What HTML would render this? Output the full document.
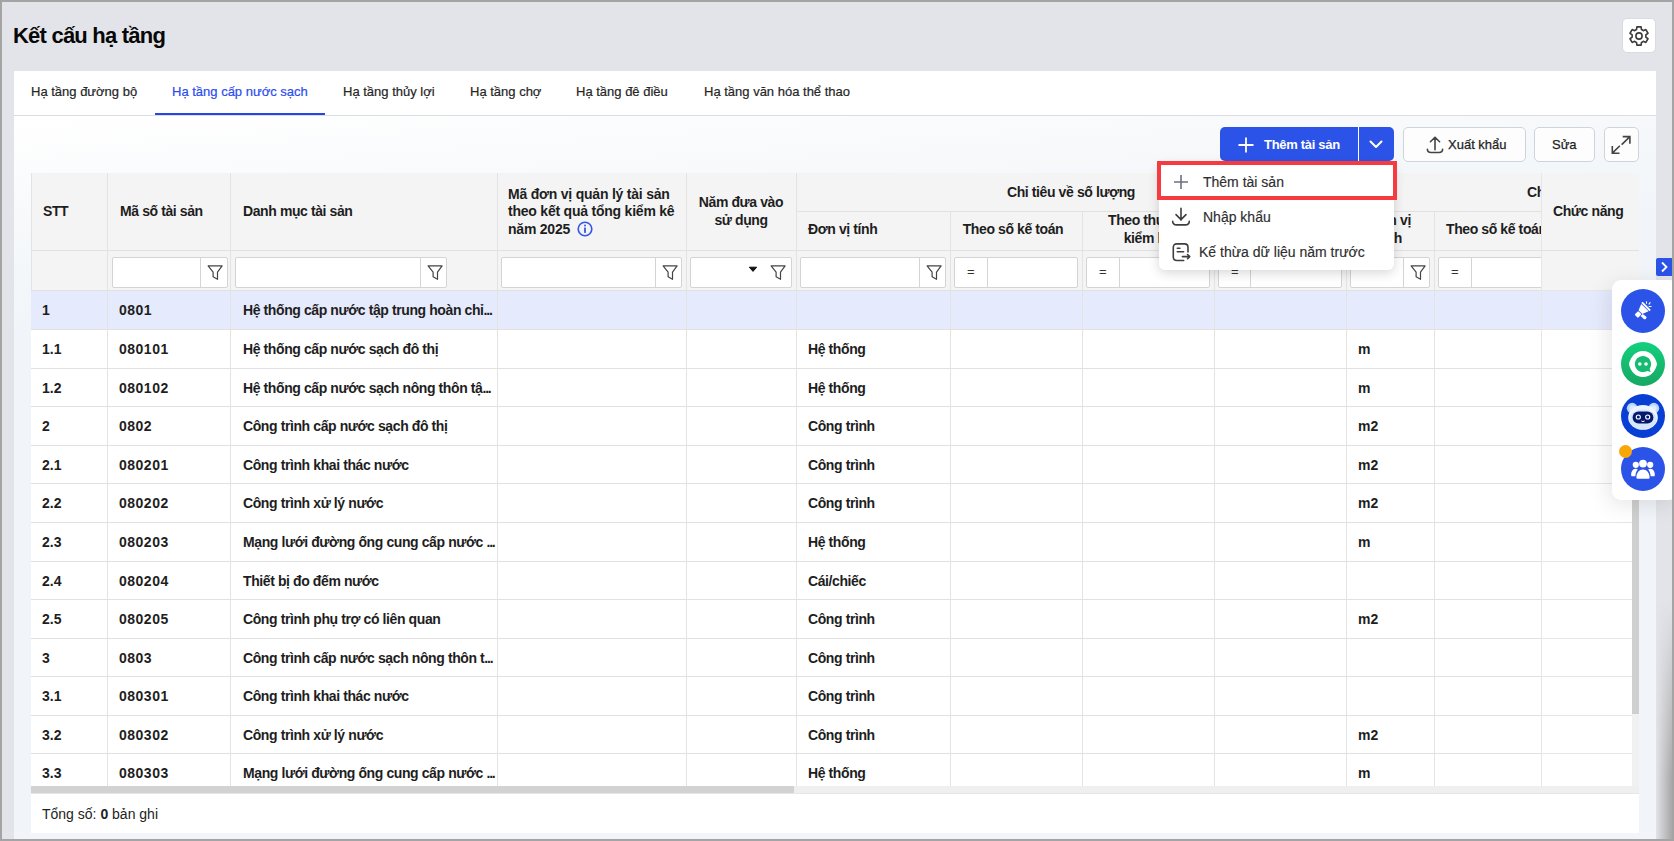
<!DOCTYPE html><html><head><meta charset="utf-8"><style>
*{box-sizing:border-box;margin:0;padding:0}
html,body{width:1674px;height:841px;overflow:hidden}
body{position:relative;background:#e3e4e9;font-family:"Liberation Sans",sans-serif;color:#212121}
.a{position:absolute}
#frame{position:absolute;left:0;top:0;width:1674px;height:841px;border:2px solid #a4a4a4;z-index:100}
#title{left:13px;top:23px;font-size:22px;letter-spacing:-0.78px;font-weight:700;color:#080808;line-height:26px;white-space:nowrap}
#gear{left:1622px;top:18px;width:34px;height:35px;background:#fff;border:1px solid #d7dbe2;border-radius:5px}
#panel{left:14px;top:71px;width:1642px;height:768px;background:linear-gradient(176deg,#ffffff 50px,#f7f9fb 150px,#f1f5f9 260px,#f1f5f9 100%)}
#tabs{left:14px;top:71px;width:1642px;height:45px;background:#fff;border-bottom:1px solid #d9dce3}
.tab{position:absolute;top:84px;font-size:13px;line-height:16px;color:#262626;white-space:nowrap;-webkit-text-stroke:0.2px #262626}
.tab.act{color:#2a4cf0;-webkit-text-stroke:0.2px #2a4cf0}
#tabline{left:155px;top:113px;width:170px;height:2px;background:#2446e6}
.btn{position:absolute;top:127px;height:35px;border:1px solid #cfd4dc;border-radius:5px;background:#fdfdfe;font-size:13px;line-height:32px;color:#1f1f1f;white-space:nowrap}
#addbtn{left:1220px;top:127px;width:174px;height:34px;background:#2c53e8;border-radius:5px}
.bg{position:absolute;background:#f4f4f4}
.hd{position:absolute;font-size:14px;letter-spacing:-0.4px;font-weight:700;line-height:17.5px;color:#1e1e1e;white-space:nowrap}
.vl{position:absolute;width:1px;background:#e3e3e3}
.hl{position:absolute;height:1px;background:#e1e1e1}
.cell{position:absolute;font-size:14px;letter-spacing:-0.4px;font-weight:700;line-height:16px;color:#1e1e1e;white-space:nowrap}
.inp{position:absolute;top:257px;height:31px;background:#fff;border:1px solid #d4d4d4;border-radius:2px}
.sep{position:absolute;top:0;width:1px;height:29px;background:#d4d4d4}
.fn{position:absolute;top:6px}
.eq{position:absolute;top:6px;font-size:13px;line-height:16px;color:#333}
.mi{position:absolute;font-size:14px;line-height:16px;color:#2e2e2e;white-space:nowrap;-webkit-text-stroke:0.15px #2e2e2e}
.wc{position:absolute;left:1621px;width:44px;height:44px;border-radius:50%}
</style></head><body>
<div id="title" class="a">Kết cấu hạ tầng</div>
<div id="gear" class="a"><div class="a" style="left:4px;top:5px"><svg width="24" height="24" viewBox="0 0 24 24" fill="none" stroke="#3c3c3c" stroke-width="1.6" stroke-linejoin="round"><path d="M8.55 6.02 L9.53 5.56 L9.89 2.84 L14.11 2.84 L14.47 5.56 L15.45 6.02 L16.34 6.64 L18.87 5.59 L20.99 9.25 L18.82 10.92 L18.90 12.00 L18.82 13.08 L20.99 14.75 L18.87 18.41 L16.34 17.36 L15.45 17.98 L14.47 18.44 L14.11 21.16 L9.89 21.16 L9.53 18.44 L8.55 17.98 L7.66 17.36 L5.13 18.41 L3.01 14.75 L5.18 13.08 L5.10 12.00 L5.18 10.92 L3.01 9.25 L5.13 5.59 L7.66 6.64Z"/><circle cx="12" cy="12" r="3.1"/></svg></div></div>
<div id="panel" class="a"></div>
<div id="tabs" class="a"></div>
<div class="tab" style="left:31px">Hạ tầng đường bộ</div>
<div class="tab act" style="left:172px">Hạ tầng cấp nước sạch</div>
<div class="tab" style="left:343px">Hạ tầng thủy lợi</div>
<div class="tab" style="left:470px">Hạ tầng chợ</div>
<div class="tab" style="left:576px">Hạ tầng đê điều</div>
<div class="tab" style="left:704px">Hạ tầng văn hóa thể thao</div>
<div id="tabline" class="a"></div>
<div class="bg" style="left:31px;top:173px;width:1608px;height:118px"></div>
<div class="a" style="left:31px;top:291px;width:1601px;height:502px;background:#fff"></div>
<div class="a" style="left:31px;top:291px;width:1601px;height:38px;background:#e6eafd"></div>
<div class="hl" style="left:31px;top:329px;width:1601px"></div>
<div class="cell" style="left:42px;top:302.49px;letter-spacing:0px">1</div>
<div class="cell" style="left:119px;top:302.49px;letter-spacing:0.5px">0801</div>
<div class="cell" style="left:243px;top:302.49px;letter-spacing:-0.4px">Hệ thống cấp nước tập trung hoàn chỉ<span style="letter-spacing:-1.2px">...</span></div>
<div class="hl" style="left:31px;top:368px;width:1601px"></div>
<div class="cell" style="left:42px;top:341.07px;letter-spacing:0px">1.1</div>
<div class="cell" style="left:119px;top:341.07px;letter-spacing:0.5px">080101</div>
<div class="cell" style="left:243px;top:341.07px;letter-spacing:-0.4px">Hệ thống cấp nước sạch đô thị</div>
<div class="cell" style="left:808px;top:341.07px;letter-spacing:-0.4px">Hệ thống</div>
<div class="cell" style="left:1358px;top:341.07px;letter-spacing:0px">m</div>
<div class="hl" style="left:31px;top:406px;width:1601px"></div>
<div class="cell" style="left:42px;top:379.65px;letter-spacing:0px">1.2</div>
<div class="cell" style="left:119px;top:379.65px;letter-spacing:0.5px">080102</div>
<div class="cell" style="left:243px;top:379.65px;letter-spacing:-0.4px">Hệ thống cấp nước sạch nông thôn tậ<span style="letter-spacing:-1.2px">...</span></div>
<div class="cell" style="left:808px;top:379.65px;letter-spacing:-0.4px">Hệ thống</div>
<div class="cell" style="left:1358px;top:379.65px;letter-spacing:0px">m</div>
<div class="hl" style="left:31px;top:445px;width:1601px"></div>
<div class="cell" style="left:42px;top:418.23px;letter-spacing:0px">2</div>
<div class="cell" style="left:119px;top:418.23px;letter-spacing:0.5px">0802</div>
<div class="cell" style="left:243px;top:418.23px;letter-spacing:-0.4px">Công trình cấp nước sạch đô thị</div>
<div class="cell" style="left:808px;top:418.23px;letter-spacing:-0.4px">Công trình</div>
<div class="cell" style="left:1358px;top:418.23px;letter-spacing:0px">m2</div>
<div class="hl" style="left:31px;top:483px;width:1601px"></div>
<div class="cell" style="left:42px;top:456.81px;letter-spacing:0px">2.1</div>
<div class="cell" style="left:119px;top:456.81px;letter-spacing:0.5px">080201</div>
<div class="cell" style="left:243px;top:456.81px;letter-spacing:-0.4px">Công trình khai thác nước</div>
<div class="cell" style="left:808px;top:456.81px;letter-spacing:-0.4px">Công trình</div>
<div class="cell" style="left:1358px;top:456.81px;letter-spacing:0px">m2</div>
<div class="hl" style="left:31px;top:522px;width:1601px"></div>
<div class="cell" style="left:42px;top:495.39px;letter-spacing:0px">2.2</div>
<div class="cell" style="left:119px;top:495.39px;letter-spacing:0.5px">080202</div>
<div class="cell" style="left:243px;top:495.39px;letter-spacing:-0.4px">Công trình xử lý nước</div>
<div class="cell" style="left:808px;top:495.39px;letter-spacing:-0.4px">Công trình</div>
<div class="cell" style="left:1358px;top:495.39px;letter-spacing:0px">m2</div>
<div class="hl" style="left:31px;top:561px;width:1601px"></div>
<div class="cell" style="left:42px;top:533.97px;letter-spacing:0px">2.3</div>
<div class="cell" style="left:119px;top:533.97px;letter-spacing:0.5px">080203</div>
<div class="cell" style="left:243px;top:533.97px;letter-spacing:-0.4px">Mạng lưới đường ống cung cấp nước <span style="letter-spacing:-1.2px">...</span></div>
<div class="cell" style="left:808px;top:533.97px;letter-spacing:-0.4px">Hệ thống</div>
<div class="cell" style="left:1358px;top:533.97px;letter-spacing:0px">m</div>
<div class="hl" style="left:31px;top:599px;width:1601px"></div>
<div class="cell" style="left:42px;top:572.55px;letter-spacing:0px">2.4</div>
<div class="cell" style="left:119px;top:572.55px;letter-spacing:0.5px">080204</div>
<div class="cell" style="left:243px;top:572.55px;letter-spacing:-0.4px">Thiết bị đo đếm nước</div>
<div class="cell" style="left:808px;top:572.55px;letter-spacing:-0.4px">Cái/chiếc</div>
<div class="hl" style="left:31px;top:638px;width:1601px"></div>
<div class="cell" style="left:42px;top:611.13px;letter-spacing:0px">2.5</div>
<div class="cell" style="left:119px;top:611.13px;letter-spacing:0.5px">080205</div>
<div class="cell" style="left:243px;top:611.13px;letter-spacing:-0.4px">Công trình phụ trợ có liên quan</div>
<div class="cell" style="left:808px;top:611.13px;letter-spacing:-0.4px">Công trình</div>
<div class="cell" style="left:1358px;top:611.13px;letter-spacing:0px">m2</div>
<div class="hl" style="left:31px;top:676px;width:1601px"></div>
<div class="cell" style="left:42px;top:649.71px;letter-spacing:0px">3</div>
<div class="cell" style="left:119px;top:649.71px;letter-spacing:0.5px">0803</div>
<div class="cell" style="left:243px;top:649.71px;letter-spacing:-0.4px">Công trình cấp nước sạch nông thôn t<span style="letter-spacing:-1.2px">...</span></div>
<div class="cell" style="left:808px;top:649.71px;letter-spacing:-0.4px">Công trình</div>
<div class="hl" style="left:31px;top:715px;width:1601px"></div>
<div class="cell" style="left:42px;top:688.29px;letter-spacing:0px">3.1</div>
<div class="cell" style="left:119px;top:688.29px;letter-spacing:0.5px">080301</div>
<div class="cell" style="left:243px;top:688.29px;letter-spacing:-0.4px">Công trình khai thác nước</div>
<div class="cell" style="left:808px;top:688.29px;letter-spacing:-0.4px">Công trình</div>
<div class="hl" style="left:31px;top:753px;width:1601px"></div>
<div class="cell" style="left:42px;top:726.87px;letter-spacing:0px">3.2</div>
<div class="cell" style="left:119px;top:726.87px;letter-spacing:0.5px">080302</div>
<div class="cell" style="left:243px;top:726.87px;letter-spacing:-0.4px">Công trình xử lý nước</div>
<div class="cell" style="left:808px;top:726.87px;letter-spacing:-0.4px">Công trình</div>
<div class="cell" style="left:1358px;top:726.87px;letter-spacing:0px">m2</div>
<div class="hl" style="left:31px;top:792px;width:1601px"></div>
<div class="cell" style="left:42px;top:765.45px;letter-spacing:0px">3.3</div>
<div class="cell" style="left:119px;top:765.45px;letter-spacing:0.5px">080303</div>
<div class="cell" style="left:243px;top:765.45px;letter-spacing:-0.4px">Mạng lưới đường ống cung cấp nước <span style="letter-spacing:-1.2px">...</span></div>
<div class="cell" style="left:808px;top:765.45px;letter-spacing:-0.4px">Hệ thống</div>
<div class="cell" style="left:1358px;top:765.45px;letter-spacing:0px">m</div>
<div class="vl" style="left:107px;top:173px;height:620px"></div>
<div class="vl" style="left:230px;top:173px;height:620px"></div>
<div class="vl" style="left:497px;top:173px;height:620px"></div>
<div class="vl" style="left:686px;top:173px;height:620px"></div>
<div class="vl" style="left:796px;top:173px;height:620px"></div>
<div class="vl" style="left:950px;top:173px;height:620px"></div>
<div class="vl" style="left:1082px;top:173px;height:620px"></div>
<div class="vl" style="left:1214px;top:173px;height:620px"></div>
<div class="vl" style="left:1346px;top:173px;height:620px"></div>
<div class="vl" style="left:1434px;top:173px;height:620px"></div>
<div class="vl" style="left:1541px;top:173px;height:620px"></div>
<div class="vl" style="left:31px;top:173px;height:118px"></div>
<div class="hl" style="left:31px;top:250px;width:1608px"></div>
<div class="hl" style="left:31px;top:290px;width:1601px"></div>
<div class="hl" style="left:796px;top:211px;width:745px"></div>
<div class="bg" style="left:950px;top:173px;width:1px;height:38px"></div>
<div class="bg" style="left:1082px;top:173px;width:1px;height:38px"></div>
<div class="bg" style="left:1214px;top:173px;width:1px;height:38px"></div>
<div class="bg" style="left:1346px;top:173px;width:1px;height:38px"></div>
<div class="bg" style="left:1434px;top:173px;width:1px;height:38px"></div>
<div class="hd" style="left:43px;top:203px">STT</div>
<div class="hd" style="left:120px;top:203px">Mã số tài sản</div>
<div class="hd" style="left:243px;top:203px">Danh mục tài sản</div>
<div class="hd" style="left:508px;top:186px;line-height:17.3px;letter-spacing:-0.22px">Mã đơn vị quản lý tài sản<br>theo kết quả tổng kiểm kê<br>năm 2025</div><svg width="16" height="16" viewBox="0 0 16 16" style="position:absolute;left:577px;top:221px"><circle cx="8" cy="8" r="6.8" fill="none" stroke="#3456e6" stroke-width="1.6"/><rect x="7.1" y="6.5" width="1.8" height="5.4" fill="#3456e6"/><circle cx="8" cy="4.5" r="1" fill="#3456e6"/></svg>
<div class="hd" style="left:686px;top:193px;width:110px;text-align:center;line-height:18px">Năm đưa vào<br>sử dụng</div>
<div class="hd" style="left:796px;top:184px;width:550px;text-align:center">Chỉ tiêu về số lượng</div>
<div class="hd" style="left:808px;top:221px">Đơn vị tính</div>
<div class="hd" style="left:947px;top:221px;width:132px;text-align:center">Theo số kế toán</div>
<div class="hd" style="left:1082px;top:212px;width:132px;text-align:center;line-height:17.5px">Theo thực tế<br>kiểm kê</div>
<div class="hd" style="left:1214px;top:221px;width:132px;text-align:center">Chênh lệch</div>
<div class="hd" style="left:1346px;top:212px;width:88px;text-align:center;line-height:17.5px">Đơn vị<br>tính</div>
<div class="hd" style="left:1446px;top:221px">Theo số kế toán</div>
<div class="hd" style="left:1527px;top:184px">Chỉ tiêu về giá trị</div>
<div class="inp" style="left:112px;width:116px"><div class="sep" style="left:87px"></div><div class="fn" style="left:94px"><svg width="17" height="17" viewBox="0 0 17 17" fill="none" stroke="#444" stroke-width="1.2" stroke-linejoin="round"><path d="M1.1 1.9H15.1L10.5 8.1V15.3L6.1 12.8V8.1Z"/></svg></div></div>
<div class="inp" style="left:235px;width:212px"><div class="sep" style="left:184px"></div><div class="fn" style="left:191px"><svg width="17" height="17" viewBox="0 0 17 17" fill="none" stroke="#444" stroke-width="1.2" stroke-linejoin="round"><path d="M1.1 1.9H15.1L10.5 8.1V15.3L6.1 12.8V8.1Z"/></svg></div></div>
<div class="inp" style="left:501px;width:181px"><div class="sep" style="left:153px"></div><div class="fn" style="left:160px"><svg width="17" height="17" viewBox="0 0 17 17" fill="none" stroke="#444" stroke-width="1.2" stroke-linejoin="round"><path d="M1.1 1.9H15.1L10.5 8.1V15.3L6.1 12.8V8.1Z"/></svg></div></div>
<div class="inp" style="left:690px;width:102px"><div class="fn" style="left:79px"><svg width="17" height="17" viewBox="0 0 17 17" fill="none" stroke="#444" stroke-width="1.2" stroke-linejoin="round"><path d="M1.1 1.9H15.1L10.5 8.1V15.3L6.1 12.8V8.1Z"/></svg></div><svg class="a" style="left:57px;top:8px" width="10" height="7" viewBox="0 0 10 7"><path d="M1.3 1.2h7.4L5 5.4z" fill="#111" stroke="#111" stroke-width="1" stroke-linejoin="round"/></svg></div>
<div class="inp" style="left:800px;width:146px"><div class="sep" style="left:118px"></div><div class="fn" style="left:125px"><svg width="17" height="17" viewBox="0 0 17 17" fill="none" stroke="#444" stroke-width="1.2" stroke-linejoin="round"><path d="M1.1 1.9H15.1L10.5 8.1V15.3L6.1 12.8V8.1Z"/></svg></div></div>
<div class="inp" style="left:954px;width:124px"><div class="sep" style="left:32px"></div><div class="eq" style="left:12px">=</div></div>
<div class="inp" style="left:1086px;width:124px"><div class="sep" style="left:32px"></div><div class="eq" style="left:12px">=</div></div>
<div class="inp" style="left:1218px;width:124px"><div class="sep" style="left:31px"></div><div class="eq" style="left:12px">=</div></div>
<div class="inp" style="left:1350px;width:80px"><div class="sep" style="left:52px"></div><div class="fn" style="left:59px"><svg width="17" height="17" viewBox="0 0 17 17" fill="none" stroke="#444" stroke-width="1.2" stroke-linejoin="round"><path d="M1.1 1.9H15.1L10.5 8.1V15.3L6.1 12.8V8.1Z"/></svg></div></div>
<div class="inp" style="left:1438px;width:122px"><div class="sep" style="left:32px"></div><div class="eq" style="left:12px">=</div></div>
<div class="bg" style="left:1541px;top:173px;width:98px;height:118px;border-left:1px solid #e6e6e6;border-bottom:1px solid #e6e6e6"></div>
<div class="hl" style="left:1541px;top:250px;width:98px"></div>
<div class="hd" style="left:1553px;top:203px">Chức năng</div>
<div class="a" style="left:1541px;top:291px;width:91px;height:39px;background:#e6eafd;border-left:1px solid #e6e6e6;border-bottom:1px solid #e6e6e6"></div>
<div class="a" style="left:1541px;top:330px;width:91px;height:39px;background:#fff;border-left:1px solid #e6e6e6;border-bottom:1px solid #e6e6e6"></div>
<div class="a" style="left:1541px;top:369px;width:91px;height:38px;background:#fff;border-left:1px solid #e6e6e6;border-bottom:1px solid #e6e6e6"></div>
<div class="a" style="left:1541px;top:407px;width:91px;height:39px;background:#fff;border-left:1px solid #e6e6e6;border-bottom:1px solid #e6e6e6"></div>
<div class="a" style="left:1541px;top:446px;width:91px;height:38px;background:#fff;border-left:1px solid #e6e6e6;border-bottom:1px solid #e6e6e6"></div>
<div class="a" style="left:1541px;top:484px;width:91px;height:39px;background:#fff;border-left:1px solid #e6e6e6;border-bottom:1px solid #e6e6e6"></div>
<div class="a" style="left:1541px;top:523px;width:91px;height:39px;background:#fff;border-left:1px solid #e6e6e6;border-bottom:1px solid #e6e6e6"></div>
<div class="a" style="left:1541px;top:562px;width:91px;height:38px;background:#fff;border-left:1px solid #e6e6e6;border-bottom:1px solid #e6e6e6"></div>
<div class="a" style="left:1541px;top:600px;width:91px;height:39px;background:#fff;border-left:1px solid #e6e6e6;border-bottom:1px solid #e6e6e6"></div>
<div class="a" style="left:1541px;top:639px;width:91px;height:38px;background:#fff;border-left:1px solid #e6e6e6;border-bottom:1px solid #e6e6e6"></div>
<div class="a" style="left:1541px;top:677px;width:91px;height:39px;background:#fff;border-left:1px solid #e6e6e6;border-bottom:1px solid #e6e6e6"></div>
<div class="a" style="left:1541px;top:716px;width:91px;height:38px;background:#fff;border-left:1px solid #e6e6e6;border-bottom:1px solid #e6e6e6"></div>
<div class="a" style="left:1541px;top:754px;width:91px;height:39px;background:#fff;border-left:1px solid #e6e6e6;border-bottom:1px solid #e6e6e6"></div>
<div class="a" style="left:1632px;top:291px;width:7px;height:502px;background:#f1f1f1"></div>
<div class="a" style="left:1632px;top:291px;width:7px;height:423px;background:#cfcfcf"></div>
<div class="a" style="left:31px;top:786px;width:1608px;height:7px;background:#efefef"></div>
<div class="a" style="left:31px;top:786px;width:763px;height:7px;background:#d2d2d2"></div>
<div class="a" style="left:31px;top:793px;width:1608px;height:1px;background:#e6e6e6"></div>
<div class="a" style="left:31px;top:794px;width:1608px;height:39px;background:#fff"></div>
<div class="a" style="left:42px;top:806px;font-size:14px;line-height:16px;color:#222;white-space:nowrap">Tổng số: <b>0</b> bản ghi</div>
<div id="addbtn" class="a"></div>
<svg class="a" style="left:1238px;top:137px" width="16" height="16" viewBox="0 0 16 16"><path d="M8 0.5v15M0.5 8h15" stroke="#fff" stroke-width="1.8"/></svg>
<div class="a" style="left:1264px;top:137px;font-size:13px;font-weight:700;letter-spacing:-0.3px;line-height:16px;color:#fff;white-space:nowrap">Thêm tài sản</div>
<div class="a" style="left:1358px;top:127px;width:1px;height:34px;background:#fff"></div>
<svg class="a" style="left:1369px;top:140px" width="14" height="9" viewBox="0 0 14 9"><path d="M1.5 1.5l5.5 5.5l5.5-5.5" fill="none" stroke="#fff" stroke-width="2" stroke-linecap="round" stroke-linejoin="round"/></svg>
<div class="btn" style="left:1403px;width:123px"></div>
<svg class="a" style="left:1425px;top:135px" width="20" height="20" viewBox="0 0 20 20" fill="none" stroke="#444" stroke-width="1.6" stroke-linecap="round" stroke-linejoin="round"><path d="M10 2.2v12.5M5.4 6.7L10 2.2l4.6 4.5M2.4 14.3c0 1.9 1.4 3.2 3.6 3.2h8c2.2 0 3.6-1.3 3.6-3.2"/></svg>
<div class="a" style="left:1448px;top:137px;font-size:13px;line-height:16px;color:#1f1f1f;white-space:nowrap;-webkit-text-stroke:0.25px #1f1f1f">Xuất khẩu</div>
<div class="btn" style="left:1534px;width:61px"></div>
<div class="a" style="left:1552px;top:137px;font-size:13px;line-height:16px;color:#1f1f1f;white-space:nowrap;-webkit-text-stroke:0.25px #1f1f1f">Sửa</div>
<div class="btn" style="left:1604px;width:35px"></div>
<svg class="a" style="left:1604px;top:127px" width="35" height="35" viewBox="0 0 35 35" fill="none" stroke="#444" stroke-width="1.6" stroke-linecap="square"><path d="M19.5 9.6h6.4v6.3M25.6 9.9l-7.4 7.2M8.3 19.8v6.4h6.4M8.6 25.9l6.7-6.6"/></svg>
<div class="a" style="left:1159px;top:163px;width:235px;height:107px;background:#fff;border-radius:6px;box-shadow:0 3px 12px rgba(0,0,0,0.16)"></div>
<svg class="a" style="left:1174px;top:175px" width="14" height="14" viewBox="0 0 14 14"><path d="M7 0v14M0 7h14" stroke="#6b7280" stroke-width="1.6"/></svg>
<div class="mi" style="left:1203px;top:174px">Thêm tài sản</div>
<svg class="a" style="left:1171px;top:207px" width="20" height="20" viewBox="0 0 20 20" fill="none" stroke="#3e3e3e" stroke-width="1.6" stroke-linecap="round" stroke-linejoin="round"><path d="M10 1.4v11.8M5 7.6l5 5l5-5M1.7 14.3c0 2.1 1.6 3.6 4 3.6h8.6c2.4 0 4-1.5 4-3.6"/></svg>
<div class="mi" style="left:1203px;top:209px">Nhập khẩu</div>
<svg class="a" style="left:1170px;top:241px" width="22" height="22" viewBox="0 0 22 22" fill="none" stroke="#3e3e3e" stroke-width="1.6" stroke-linecap="round" stroke-linejoin="round"><path d="M18 11V6.5C18 3.9 16.8 2.9 14.5 2.9H7C4.5 2.9 3.3 4 3.3 6.5v9.6c0 2.4 1.2 3.4 3.7 3.4h6.7M7.3 7.3h2.6M7.3 10.8h6.3M12.4 15.6h7.2M17.6 13.5l2.1 2.1l-2.1 2.1"/></svg>
<div class="mi" style="left:1199px;top:244px">Kế thừa dữ liệu năm trước</div>
<div class="a" style="left:1157px;top:161px;width:240px;height:39px;border:4px solid #f53b3f"></div>
<div class="a" style="left:1656px;top:258px;width:16px;height:18px;background:#2c53e8;border-radius:2px 0 0 2px"></div>
<svg class="a" style="left:1656px;top:258px" width="16" height="18" viewBox="0 0 16 18"><path d="M6 4.5l4.5 4.5L6 13.5" fill="none" stroke="#fff" stroke-width="1.8"/></svg>
<div class="a" style="left:1612px;top:280px;width:66px;height:220px;background:#fff;border-radius:9px;box-shadow:-3px 5px 22px rgba(0,0,0,0.10)"></div>
<div class="wc" style="top:289px;background:#2c53e8"></div>
<svg class="a" style="left:1621px;top:289px" width="44" height="44" viewBox="0 0 44 44"><g fill="#fff" transform="translate(17.1 25.4) rotate(-45)"><rect x="-2.7" y="-2.4" width="5.2" height="4.8" rx="1"/><path d="M3.3 -2.6L9.6 -5.2V5.2L3.3 2.6z"/><rect x="10.3" y="-5.9" width="1.9" height="11.8" rx="0.9"/><path d="M0.7 2.9h2.9l0.5 4.3c0 0.8-0.6 1.4-1.4 1.4h-0.5c-0.8 0-1.4-0.6-1.4-1.4z"/></g><path d="M25.5 12.7v1.6M28 15.1l1.1-1.5M28.1 17.5h2" stroke="#fff" stroke-width="1.1" stroke-linecap="round"/></svg>
<div class="wc" style="top:342px;background:linear-gradient(180deg,#12d07f,#17a862)"></div>
<svg class="a" style="left:1621px;top:342px" width="44" height="44" viewBox="0 0 44 44"><path d="M7.9 22C9.6 14.5 14.6 8.9 22 8.9S34.4 14.5 36.1 22C34.4 29.5 29.4 35.1 22 35.1S9.6 29.5 7.9 22z" fill="#fff"/><path d="M22 13.9c4.5 0 8.1 3.6 8.1 8.1c0 1.8-0.6 3.4-1.5 4.7l1.1 3.3l-3.4-0.9c-1.2 0.6-2.7 1-4.3 1c-4.5 0-8.1-3.6-8.1-8.1S17.5 13.9 22 13.9z" fill="#15bb70"/><circle cx="18.8" cy="22" r="1.8" fill="#fff"/><circle cx="25" cy="22" r="1.8" fill="#fff"/></svg>
<div class="wc" style="top:394px;background:#0a3fd6"></div>
<svg class="a" style="left:1621px;top:394px" width="44" height="44" viewBox="0 0 44 44"><circle cx="11.2" cy="14.2" r="5.4" fill="#b9d6fa"/><circle cx="32.8" cy="14.2" r="5.4" fill="#b9d6fa"/><circle cx="11.6" cy="14.6" r="3.3" fill="#dcebfd"/><circle cx="32.4" cy="14.6" r="3.3" fill="#dcebfd"/><ellipse cx="22" cy="23.4" rx="14.8" ry="12.4" fill="#eef5ff"/><ellipse cx="22" cy="25.2" rx="13.6" ry="10" fill="#d6e7fc"/><rect x="11.6" y="17.6" width="20.8" height="11.8" rx="5.9" fill="#04186e"/><circle cx="17.3" cy="23" r="2.6" fill="#fff"/><circle cx="26.7" cy="23" r="2.6" fill="#fff"/><circle cx="17.3" cy="23" r="1.5" fill="#04186e"/><circle cx="26.7" cy="23" r="1.5" fill="#04186e"/><path d="M20.4 27q1.6 1.1 3.2 0" stroke="#fff" stroke-width="1" fill="none"/></svg>
<div class="wc" style="top:447px;background:#2c53e8"></div>
<svg class="a" style="left:1621px;top:447px" width="44" height="44" viewBox="0 0 44 44" fill="#fff"><circle cx="22" cy="16.6" r="3.9"/><circle cx="14.8" cy="17.8" r="3.1"/><circle cx="29.2" cy="17.8" r="3.1"/><path d="M15.4 30.4c0-4.6 2.9-8 6.6-8s6.6 3.4 6.6 8c0 0.9-0.6 1.4-1.4 1.4h-10.4c-0.8 0-1.4-0.5-1.4-1.4z"/><path d="M10.2 28.4c-0.3-3.6 1.5-6.6 4.4-6.6c0.9 0 1.6 0.2 2.2 0.6c-1.4 1.6-2.2 3.7-2.4 6.3c-0.1 0.4-0.3 0.6-0.7 0.6h-2.6c-0.5 0-0.9-0.4-0.9-0.9z"/><path d="M33.8 28.4c0.3-3.6-1.5-6.6-4.4-6.6c-0.9 0-1.6 0.2-2.2 0.6c1.4 1.6 2.2 3.7 2.4 6.3c0.1 0.4 0.3 0.6 0.7 0.6h2.6c0.5 0 0.9-0.4 0.9-0.9z"/></svg>
<div class="a" style="left:1619px;top:445px;width:13px;height:13px;border-radius:50%;background:#f7a707"></div>
<div class="a" style="left:1656px;top:600px;width:16px;height:239px;background:linear-gradient(to right,rgba(160,160,160,0) 0%,rgba(160,160,160,0.9) 100%);-webkit-mask-image:linear-gradient(to bottom,transparent 0%,black 75%)"></div>
<div id="frame"></div>
</body></html>
